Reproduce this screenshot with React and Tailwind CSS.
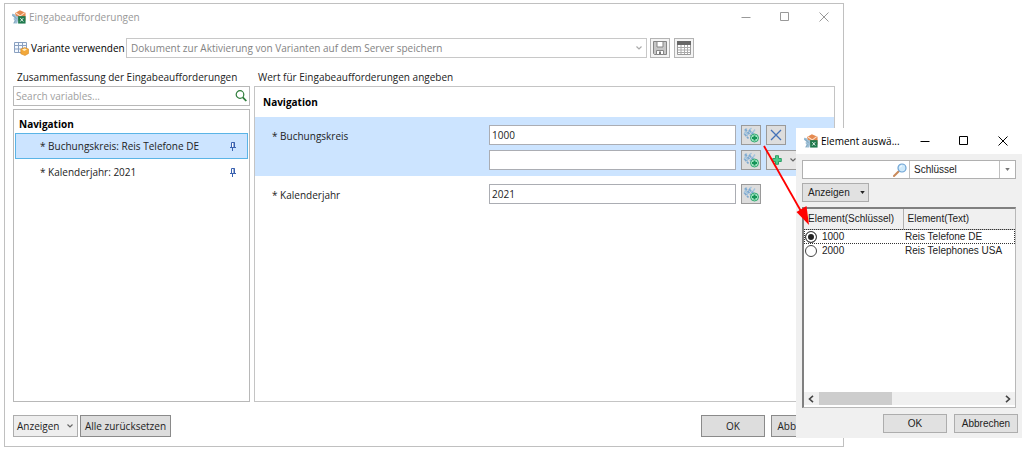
import { useState } from 'react';
import clsx from 'clsx';

const AppIcon = ({ className }) => (
  <svg viewBox="0 0 16 16" className={clsx('h-[14px] w-[14px] shrink-0', className)} aria-hidden="true">
    <path d="M3.500 3.500 9 .3 15.500 3v9H5z" fill="#e58a50" />
    <path d="M4.500 3.500 9.500 6.800 14.500 3" fill="none" stroke="#fbe0cc" strokeWidth="1.200" />
    <path d="M0 4.500c2-.5 3.500.5 4.500 2L7 7.500l.5 2L6 15.500H1.500L3 12.500 1.500 10 3 9 0 6.500z" fill="#9dbfd6" />
    <path d="M1 6l4 4M4 12l-2 3" stroke="#6f93ac" strokeWidth=".8" />
    <path d="M7 7h8.500v8.500H7z" fill="#1f7a4d" />
    <path d="m9.500 9.300 3.400 3.900m0-3.900-3.400 3.900" stroke="#e8f5ec" strokeWidth="1.100" />
  </svg>
);

const VariantIcon = () => (
  <svg viewBox="0 0 15 15" className="h-[15px] w-[15px] shrink-0" aria-hidden="true">
    <path d="M.5 1.500h12v10H.5z" fill="#f4f9ff" stroke="#8aa0c0" />
    <path d="M1 4.500h12M1 8h12M4.500 1.500v10M8.500 1.500v10" stroke="#8aa0c0" />
    <path d="m6.800 8 4-1.500 3.700 1.500v4.500L11 14.500l-4.200-1.700z" fill="#f2a83b" stroke="#d78a22" strokeWidth=".6" />
    <path d="m8 8.500 2.800-1 2.200.9-2.800 1.700z" fill="#fff0c8" />
  </svg>
);

const SaveIcon = () => (
  <svg viewBox="0 0 14 14" className="h-[14px] w-[14px]" aria-hidden="true">
    <path d="M.5.5h13v13h-12l-1-1z" fill="#c6c6c6" stroke="#858585" />
    <path d="M4 .5h6V6H4z" fill="#fff" stroke="#858585" />
    <path d="M3.500 9.500h7v4h-7z" fill="#fff" stroke="#858585" />
    <path d="M6 10.500h2V13H6z" fill="#777" />
  </svg>
);

const TableIcon = () => (
  <svg viewBox="0 0 14 14" className="h-[14px] w-[14px]" aria-hidden="true">
    <path d="M.5.5h13v13H.5z" fill="#fff" stroke="#999" />
    <path d="M0 0h14v4H0z" fill="#666" />
    <path d="M1 6.500h12M1 9h12M1 11.500h12M4 4v9M7.500 4v9M10.500 4v9" stroke="#aaa" />
  </svg>
);

const SearchIcon = () => (
  <svg viewBox="0 0 12 12" className="h-3 w-3 shrink-0" aria-hidden="true">
    <circle cx="5" cy="4.500" r="3.800" fill="none" stroke="#2f7d3b" strokeWidth="1.200" />
    <path d="m7.800 7.300 3.500 3.700" stroke="#2f7d3b" strokeWidth="1.800" />
  </svg>
);

const MagnifierIcon = () => (
  <svg viewBox="0 0 14 14" className="h-[14px] w-[14px] shrink-0" aria-hidden="true">
    <path d="M5.800 8.200 1 13" stroke="#c98a5b" strokeWidth="2" strokeLinecap="round" />
    <circle cx="9" cy="5" r="4" fill="#cfeafb" stroke="#6ea3d4" strokeWidth="1.200" />
    <path d="M7 4.500a2.500 2.500 0 0 1 2-1.700" fill="none" stroke="#fff" />
  </svg>
);

const PinIcon = () => (
  <svg viewBox="0 0 8 9" className="h-[9px] w-2" aria-hidden="true">
    <path d="M2.500 5V.5h3V5" fill="#fff" stroke="#3a62b0" />
    <path d="M4.500.5H6V5H4.500zM1 5h6v1H1z" fill="#3a62b0" />
    <path d="M3.500 6v3" stroke="#3a62b0" />
  </svg>
);

const Plus = ({ className }) => (
  <svg viewBox="0 0 10 10" className={className} aria-hidden="true">
    <path d="M3.500.7h3v2.800h2.800v3H6.500v2.800h-3V6.500H.7v-3h2.800z" fill="#4dcb8e" stroke="#1f9a5c" strokeWidth=".9" />
  </svg>
);

const PickIcon = () => (
  <svg viewBox="0 0 16 16" className="h-4 w-4" aria-hidden="true">
    <path d="m1 7.500 1.500-3 2 3.500L6.500 3 9 7.500M1.500 4 4 1.500M6.500 3 8.500 1M9.500 6l2.500-3.500" fill="none" stroke="#a3c4de" strokeWidth="1.300" />
    <path d="M2 2 9.500 10.500M1.500 7l4 4.500M6 3l5 5" stroke="#7fa9cf" strokeWidth="1.700" strokeDasharray="3 .8" />
    <circle cx="11.500" cy="11" r="4" fill="#a6e6c6" stroke="#27a468" strokeWidth=".9" />
    <path d="M11.500 8.500v5M9 11h5" stroke="#159457" strokeWidth="2" />
  </svg>
);

const Chevron = ({ className }) => (
  <svg viewBox="0 0 6 4" className={clsx('h-1 w-[6px] shrink-0', className)} aria-hidden="true">
    <path d="m.5.5 2.500 2.500L5.500.5" fill="none" stroke="currentColor" strokeWidth="1.200" />
  </svg>
);

const ScrollArrow = ({ className }) => (
  <svg viewBox="0 0 6 8" className={clsx('h-2 w-[6px] shrink-0', className)} aria-hidden="true">
    <path d="M5 .8 1.500 4 5 7.200" fill="none" stroke="currentColor" strokeWidth="1.600" />
  </svg>
);

const Triangle = ({ className }) => (
  <svg viewBox="0 0 6 4" className={clsx('h-[3px] w-[5px] shrink-0', className)} aria-hidden="true">
    <path d="M0 0h6L3 4z" fill="currentColor" />
  </svg>
);

const WindowControls = () => (
  <div className="flex shrink-0">
    <button type="button" aria-label="Minimieren" className="flex h-6 w-[39px] items-center justify-center">
      <svg viewBox="0 0 10 10" className="h-[10px] w-[10px]"><path d="M.5 5.500h9" stroke="currentColor" /></svg>
    </button>
    <button type="button" aria-label="Maximieren" className="flex h-6 w-[39px] items-center justify-center">
      <svg viewBox="0 0 10 10" className="h-[10px] w-[10px]"><path d="M.5.5h8v8h-8z" fill="none" stroke="currentColor" /></svg>
    </button>
    <button type="button" aria-label="Schließen" className="flex h-6 w-[39px] items-center justify-center">
      <svg viewBox="0 0 10 10" className="h-[10px] w-[10px]"><path d="m.5.5 9 9m0-9-9 9" stroke="currentColor" /></svg>
    </button>
  </div>
);

const ToolButton = ({ label, className = 'border-[#9a9a9a] bg-[#dddddd]', children }) => (
  <button
    type="button"
    aria-label={label}
    className={clsx('flex h-5 w-5 shrink-0 items-center justify-center border', className)}
  >
    {children}
  </button>
);

const ValueInput = ({ id, label, value }) => (
  <input
    id={id}
    aria-label={label}
    defaultValue={value}
    className="h-5 w-[247px] shrink-0 border border-[#abadb3] bg-white px-[2px] outline-none"
  />
);

const variables = [
  { id: 'buchungskreis', label: '* Buchungskreis: Reis Telefone DE' },
  { id: 'kalenderjahr', label: '* Kalenderjahr: 2021' },
];

const elements = [
  { key: '1000', text: 'Reis Telefone DE' },
  { key: '2000', text: 'Reis Telephones USA' },
];

const Summary = () => {
  const [active, setActive] = useState('buchungskreis');

  return (
    <section className="flex w-[237px] shrink-0 flex-col">
      <h2 className="flex h-[18px] items-center pl-1">Zusammenfassung der Eingabeaufforderungen</h2>
      <div className="flex h-5 items-center border border-[#b8b8b8] pr-[2px]">
        <input
          aria-label="Search variables"
          placeholder="Search variables..."
          className="h-full min-w-0 flex-1 px-[2px] outline-none placeholder:text-[#a0a0a0]"
        />
        <button type="button" aria-label="Suchen"><SearchIcon /></button>
      </div>
      <div className="mt-[3px] flex-1 border border-[#b8b8b8] px-px">
        <h3 className="flex h-[23px] items-center pt-1 pl-1 font-bold text-black">Navigation</h3>
        <ul>
          {variables.map((item) => (
            <li key={item.id}>
              <button
                type="button"
                onClick={() => setActive(item.id)}
                className={clsx(
                  'flex h-[26px] w-full items-center justify-between border pr-[10px] pl-6 text-left',
                  active === item.id ? 'border-[#5ab4e6] bg-[#cce4ff]' : 'border-transparent'
                )}
              >
                {item.label}
                <PinIcon />
              </button>
            </li>
          ))}
        </ul>
      </div>
    </section>
  );
};

const Values = () => (
  <section className="flex min-w-0 flex-1 flex-col">
    <h2 className="flex h-[18px] items-center pl-1">Wert für Eingabeaufforderungen angeben</h2>
    <div className="flex-1 overflow-hidden border border-[#c4c4c4]">
      <h3 className="flex h-[30px] items-center pl-2 font-bold text-black">Navigation</h3>
      <div className="flex bg-[#cce4ff] pt-2 pb-[6px] pl-[17px]">
        <label htmlFor="value-1" className="flex h-[22px] w-[217px] shrink-0 items-center">* Buchungskreis</label>
        <div className="flex flex-col gap-[5px]">
          <div className="flex gap-[5px]">
            <ValueInput id="value-1" value="1000" />
            <ToolButton label="Element auswählen"><PickIcon /></ToolButton>
            <ToolButton label="Wert entfernen">
              <svg viewBox="0 0 12 12" className="h-3 w-3"><path d="m1 1 10 10m0-10L1 11" stroke="#4472b8" strokeWidth="1.300" /></svg>
            </ToolButton>
          </div>
          <div className="flex gap-[5px]">
            <ValueInput label="Weiterer Wert" value="" />
            <ToolButton label="Element auswählen"><PickIcon /></ToolButton>
            <button type="button" aria-label="Wert hinzufügen" className="flex h-5 w-9 items-center justify-between border border-[#9a9a9a] bg-[#e6e6e6] px-[5px]">
              <Plus className="h-[10px] w-[10px]" />
              <Chevron className="text-[#666]" />
            </button>
          </div>
        </div>
      </div>
      <div className="flex pt-2 pl-[17px]">
        <label htmlFor="value-2" className="flex h-[22px] w-[217px] shrink-0 items-center">* Kalenderjahr</label>
        <div className="flex gap-[5px]">
          <ValueInput id="value-2" value="2021" />
          <ToolButton label="Element auswählen"><PickIcon /></ToolButton>
        </div>
      </div>
    </div>
  </section>
);

const PromptWindow = () => (
  <main className="mr-[186px] flex flex-1 flex-col border border-[#c0c0c0] bg-white">
    <header className="flex h-[25px] items-center pl-[7px] text-[#999999]">
      <AppIcon />
      <h1 className="ml-[3px] flex-1">Eingabeaufforderungen</h1>
      <WindowControls />
    </header>
    <div className="mt-[9px] flex items-center pl-[9px]">
      <VariantIcon />
      <label htmlFor="variant" className="ml-[2px] w-[95px] shrink-0 text-black">Variante verwenden</label>
      <div className="relative w-[521px]">
        <select id="variant" disabled className="block h-5 w-full appearance-none border border-[#c8c8c8] bg-white pl-1 text-[#838383] opacity-100">
          <option>Dokument zur Aktivierung von Varianten auf dem Server speichern</option>
        </select>
        <Chevron className="pointer-events-none absolute top-2 right-[5px] text-[#aaaaaa]" />
      </div>
      <ToolButton label="Speichern" className="ml-[3px] border-[#b4b4b4] bg-[#f4f4f4]"><SaveIcon /></ToolButton>
      <ToolButton label="Varianten verwalten" className="ml-1 border-[#b4b4b4] bg-[#f4f4f4]"><TableIcon /></ToolButton>
    </div>
    <div className="mt-[10px] flex flex-1 gap-1 pr-2 pl-2">
      <Summary />
      <Values />
    </div>
    <footer className="flex gap-[2px] px-2 pt-[13px] pb-[9px]">
      <button type="button" className="flex h-[22px] w-[65px] items-center justify-between border border-[#adadad] bg-[#eeeeee] pr-1 pl-[3px]">
        Anzeigen
        <Chevron className="text-[#666]" />
      </button>
      <button type="button" className="h-[22px] w-[91px] border border-[#8a8a8a] bg-[#dddddd]">Alle zurücksetzen</button>
      <button type="button" className="mr-1 ml-auto h-[22px] w-16 border border-[#8a8a8a] bg-[#dddddd]">OK</button>
      <button type="button" className="h-[22px] w-16 border border-[#8a8a8a] bg-[#dddddd]">Abbrechen</button>
    </footer>
  </main>
);

const ElementPicker = () => {
  const [selected, setSelected] = useState('1000');

  return (
    <div role="dialog" aria-labelledby="picker-title" className="absolute top-32 right-2 flex w-[226px] flex-col bg-[#f0f0f0] font-['Liberation_Sans',sans-serif] text-[#222]">
      <header className="flex h-[26px] items-center bg-white pl-2 font-['Open_Sans',sans-serif] text-black">
        <AppIcon />
        <h2 id="picker-title" className="ml-[3px] min-w-0 flex-1">Element auswä...</h2>
        <WindowControls />
      </header>
      <div className="mx-[6px] mt-[6px] flex h-[19px] items-center border border-[#b0b0b0] bg-white">
        <input aria-label="Element suchen" className="h-full min-w-0 flex-1 px-1 outline-none" />
        <button type="button" aria-label="Suchen" className="mr-[2px]"><MagnifierIcon /></button>
        <div className="relative h-full w-[106px] border-l border-[#c0c0c0]">
          <select aria-label="Suchfeld" className="block h-full w-full appearance-none bg-white pl-1 outline-none">
            <option>Schlüssel</option>
          </select>
          <span className="pointer-events-none absolute inset-y-0 right-0 flex w-4 items-center justify-center border-l border-[#c0c0c0]">
            <Triangle className="text-[#777]" />
          </span>
        </div>
      </div>
      <button type="button" className="mt-1 ml-[6px] flex h-[19px] w-[67px] items-center justify-between border border-[#adadad] bg-[#e1e1e1] pr-[3px] pl-[5px]">
        Anzeigen
        <Triangle />
      </button>
      <div className="mx-[6px] mt-[5px] flex h-[201px] flex-col border-t-2 border-r border-b border-l-2 border-t-[#808080] border-r-[#b8b8b8] border-b-[#b8b8b8] border-l-[#808080] bg-white">
        <table className="w-full table-fixed border-collapse">
          <thead>
            <tr className="h-5 bg-[#f0f0f0] text-left">
              <th className="w-[99px] border-r border-b border-[#b0b0b0] pl-1 font-normal">Element(Schlüssel)</th>
              <th className="border-b border-[#b0b0b0] pl-1 font-normal">Element(Text)</th>
            </tr>
          </thead>
          <tbody>
            {elements.map((item) => (
              <tr
                key={item.key}
                className={clsx('h-[14px] leading-[14px]', selected === item.key && 'outline-1 -outline-offset-1 outline-dotted outline-[#333]')}
              >
                <td>
                  <label className="flex items-center gap-[5px] pl-px">
                    <input
                      type="radio"
                      name="element"
                      checked={selected === item.key}
                      onChange={() => setSelected(item.key)}
                      className="h-3 w-3 appearance-none rounded-full border border-[#444] bg-white checked:bg-[#222] checked:shadow-[inset_0_0_0_2px_#fff]"
                    />
                    {item.key}
                  </label>
                </td>
                <td className="pl-[2px]">{item.text}</td>
              </tr>
            ))}
          </tbody>
        </table>
        <div className="mt-auto mb-[2px] flex h-[13px] items-center bg-[#f0f0f0] px-1 text-[#444]">
          <ScrollArrow />
          <div className="ml-[5px] h-full w-[73px] bg-[#cdcdcd]" />
          <ScrollArrow className="ml-auto rotate-180" />
        </div>
      </div>
      <footer className="flex justify-end gap-[7px] pt-[6px] pr-1 pb-[5px]">
        <button type="button" className="h-[19px] w-16 border border-[#adadad] bg-[#e1e1e1]">OK</button>
        <button type="button" className="h-[19px] w-16 border border-[#adadad] bg-[#e1e1e1]">Abbrechen</button>
      </footer>
      {/* Arrow from the pick button to the element list */}
      <svg viewBox="0 0 50 84" className="pointer-events-none absolute top-4 -left-9 h-[84px] w-[50px]" aria-hidden="true">
        <path d="m4 2 38 67" stroke="#ff0000" strokeWidth="1.800" />
        <path d="m49 81-12.500-13 10-6z" fill="#ff0000" />
      </svg>
    </div>
  );
};

const App = () => (
  <div className="relative flex min-h-screen flex-col bg-white pt-[3px] pb-2 pl-1 font-['Open_Sans','Noto_Sans',sans-serif] text-[10px] leading-4 whitespace-nowrap text-[#222]">
    <PromptWindow />
    <ElementPicker />
  </div>
);

export default App;
